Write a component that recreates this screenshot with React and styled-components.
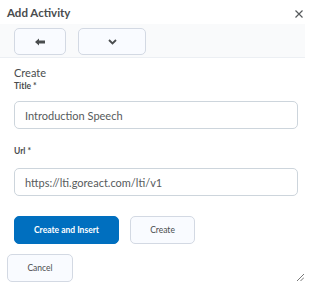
import React, { useState } from 'react';
import styled, { createGlobalStyle } from 'styled-components';

const GlobalStyle = createGlobalStyle`
    html, body {
        margin: 0;
        padding: 0;
        background: #ffffff;
    }
    body {
        font-family: "Lato", "Liberation Sans", sans-serif;
        color: #494c4e;
    }
`;

const Dialog = styled.div`
    position: relative;
    width: 310px;
    height: 286px;
    overflow: hidden;
    background: #ffffff;
`;

const Header = styled.div`
    display: flex;
    justify-content: space-between;
    align-items: flex-start;
    height: 24px;
    padding: 5px 7px 0 7px;
    box-sizing: border-box;
    h2 {
        margin: 0;
        font-size: 11.5px;
        font-weight: 700;
        color: #494c4e;
        line-height: 15px;
    }
`;

const CloseButton = styled.button`
    border: none;
    background: none;
    padding: 0;
    margin-top: 5px;
    width: 8px;
    height: 8px;
    display: flex;
    cursor: pointer;
`;

const Toolbar = styled.div`
    display: flex;
    gap: 12px;
    width: 305px;
    height: 34px;
    padding: 4px 14px 0 14px;
    box-sizing: border-box;
    background: #f9fafb;
    border-bottom: 1px solid #eceff3;
`;

const ToolButton = styled.button`
    width: ${(p) => p.$width}px;
    height: 27px;
    border: 1px solid #d3d9e3;
    border-radius: 5px;
    background: #f9fbff;
    display: flex;
    align-items: center;
    justify-content: center;
    padding: 0;
    cursor: pointer;
`;

const Body = styled.div`
    padding: 8px 12px 0 14px;
`;

const Heading = styled.div`
    font-size: 11px;
    line-height: 14px;
    color: #494c4e;
    font-weight: 400;
`;

const Label = styled.label`
    display: block;
    font-size: 8.5px;
    font-weight: 700;
    line-height: 12px;
    color: #494c4e;
    margin-top: ${(p) => p.$top}px;
`;

const Input = styled.input`
    display: block;
    width: 284px;
    height: 28px;
    box-sizing: border-box;
    margin-top: ${(p) => p.$top}px;
    border: 1px solid #cdd5dc;
    border-radius: 5px;
    padding: 0 10px;
    font-family: "Lato", "Liberation Sans", sans-serif;
    font-size: 11px;
    color: #565a5c;
    background: #ffffff;
    outline: none;
`;

const Actions = styled.div`
    display: flex;
    gap: 11px;
    margin-top: 20px;
`;

const Button = styled.button`
    height: 28px;
    width: ${(p) => p.$width}px;
    box-sizing: border-box;
    border-radius: 5px;
    border: 1px solid ${(p) => (p.$primary ? '#006fbf' : '#d3d9e3')};
    background: ${(p) => (p.$primary ? '#006fbf' : '#f9fbff')};
    color: ${(p) => (p.$primary ? '#ffffff' : '#494c4e')};
    font-family: "Lato", "Liberation Sans", sans-serif;
    font-size: 8.5px;
    font-weight: ${(p) => (p.$primary ? 700 : 400)};
    padding: 0;
    cursor: pointer;
`;

const Footer = styled.div`
    padding: 10px 0 0 7px;
`;

const Grip = styled.svg`
    position: absolute;
    right: 6px;
    bottom: 5px;
`;

const App = () => {
    const [form, setForm] = useState({
        title: 'Introduction Speech',
        url: 'https://lti.goreact.com/lti/v1',
    });

    return (
        <>
            <GlobalStyle />
            <Dialog>
                <Header>
                    <h2>Add Activity</h2>
                    <CloseButton aria-label="Close">
                        <svg width="8" height="8" viewBox="0 0 8 8">
                            <path d="M0.5 0.5L7.5 7.5M7.5 0.5L0.5 7.5" stroke="#565a5c" strokeWidth="1.2" />
                        </svg>
                    </CloseButton>
                </Header>
                <Toolbar>
                    <ToolButton $width={52} aria-label="Back">
                        <svg width="10" height="8" viewBox="0 0 10 8">
                            <path d="M0 4L4 0.5V2.6H10V5.4H4V7.5Z" fill="#494c4e" />
                        </svg>
                    </ToolButton>
                    <ToolButton $width={68} aria-label="More">
                        <svg width="9" height="6" viewBox="0 0 9 6">
                            <path d="M1 1L4.5 4.5L8 1" stroke="#494c4e" strokeWidth="1.8" fill="none" />
                        </svg>
                    </ToolButton>
                </Toolbar>
                <Body>
                    <Heading>Create</Heading>
                    <Label $top={0} htmlFor="title">Title *</Label>
                    <Input $top={9} id="title" value={form.title} onChange={(e) => setForm({ ...form, title: e.target.value })} />
                    <Label $top={16} htmlFor="url">Url *</Label>
                    <Input $top={11} id="url" value={form.url} onChange={(e) => setForm({ ...form, url: e.target.value })} />
                    <Actions>
                        <Button $primary $width={105}>Create and Insert</Button>
                        <Button $width={65}>Create</Button>
                    </Actions>
                </Body>
                <Footer>
                    <Button $width={66}>Cancel</Button>
                </Footer>
                <Grip width="7" height="7" viewBox="0 0 7 7">
                    <path d="M7 0L0 7M7 3.5L3.5 7" stroke="#777" strokeWidth="1" />
                </Grip>
            </Dialog>
        </>
    );
};

export default App;
